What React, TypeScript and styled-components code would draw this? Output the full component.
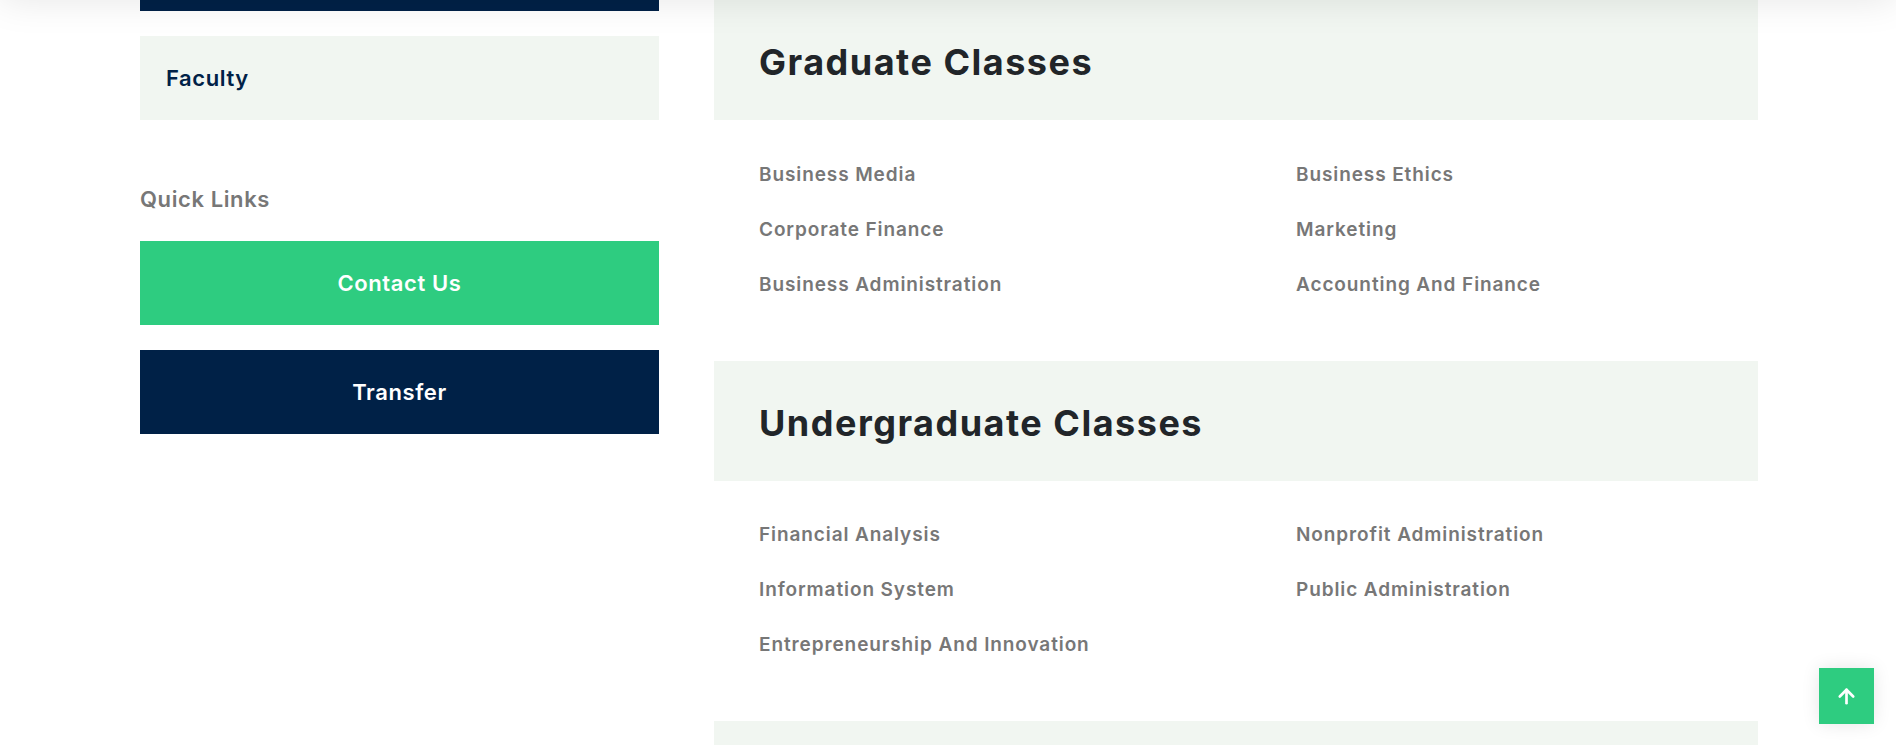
import React from 'react';
import styled, { createGlobalStyle } from 'styled-components';
import { ArrowUp } from 'lucide-react';

type Section = {
  title: string
  classes: string[]
}

const sections: Section[] = [
  {
    title: 'Graduate Classes',
    classes: ['Business Media', 'Business Ethics', 'Corporate Finance', 'Marketing', 'Business Administration', 'Accounting And Finance'],
  },
  {
    title: 'Undergraduate Classes',
    classes: ['Financial Analysis', 'Nonprofit Administration', 'Information System', 'Public Administration', 'Entrepreneurship And Innovation'],
  },
  {
    // next section, only its header background is in view
    title: '',
    classes: [],
  },
];

const GlobalStyle = createGlobalStyle`
  * { box-sizing: border-box; }
  html, body {
    margin: 0;
    padding: 0;
    background: #ffffff;
    overflow: hidden;
  }
  body {
    font-family: Inter, "Noto Sans", sans-serif;
  }
`;

const App: React.FC = () => {
  return (
    <>
      <GlobalStyle />
      <HeaderShadow />
      <Page>
        <Sidebar>
          <SideItem active />
          <SideItem>Faculty</SideItem>
          <QuickTitle>Quick Links</QuickTitle>
          <LinkButton variant="green">Contact Us</LinkButton>
          <LinkButton variant="navy">Transfer</LinkButton>
        </Sidebar>
        <Content>
          {sections.map((s, i) => (
            <ClassSection key={i}>
              <SectionHead>
                {s.title && <SectionTitle>{s.title}</SectionTitle>}
              </SectionHead>
              {s.classes.length > 0 && (
                <ClassList>
                  {s.classes.map((c) => (
                    <ClassItem key={c}>{c}</ClassItem>
                  ))}
                </ClassList>
              )}
            </ClassSection>
          ))}
        </Content>
      </Page>
      <BackToTop aria-label="Back to top">
        <ArrowUp size={23} strokeWidth={2.8} />
      </BackToTop>
    </>
  );
};

export default App;

const HeaderShadow = styled.div`
  position: fixed;
  top: -80px;
  left: 0;
  right: 0;
  height: 80px;
  background: #fff;
  box-shadow: 0 0 38px rgba(0, 0, 0, 0.1);
  z-index: 5;
`;

const Page = styled.div`
  display: flex;
  align-items: flex-start;
  gap: 55px;
  margin-top: -73px;
  padding: 0 138px 0 140px;
`;

const Sidebar = styled.aside`
  width: 519px;
  flex-shrink: 0;
  display: flex;
  flex-direction: column;
`;

const SideItem = styled.div<{ active?: boolean }>`
  height: 84px;
  display: flex;
  align-items: center;
  padding-left: 26px;
  margin-bottom: 25px;
  background: ${(p) => (p.active ? '#002147' : '#f1f6f1')};
  color: ${(p) => (p.active ? '#ffffff' : '#002147')};
  font-size: 22px;
  font-weight: 600;
  letter-spacing: 0.6px;
`;

const QuickTitle = styled.h4`
  margin: 43px 0 31px;
  font-size: 22px;
  line-height: 1;
  font-weight: 600;
  letter-spacing: 0.6px;
  color: #777777;
`;

const LinkButton = styled.a<{ variant: 'green' | 'navy' }>`
  height: 84px;
  display: flex;
  align-items: center;
  justify-content: center;
  margin-bottom: 25px;
  background: ${(p) => (p.variant === 'green' ? '#2ecc80' : '#002147')};
  color: #ffffff;
  font-size: 22px;
  font-weight: 600;
  letter-spacing: 0.6px;
  cursor: pointer;
`;

const Content = styled.main`
  flex: 1;
  padding-top: 73px;
`;

const ClassSection = styled.section`
  display: flex;
  flex-direction: column;
`;

const SectionHead = styled.div`
  height: 120px;
  display: flex;
  align-items: center;
  padding: 6px 0 0 45px;
  background: #f1f6f1;
`;

const SectionTitle = styled.h2`
  margin: 0;
  font-size: 36px;
  line-height: 1.2;
  font-weight: 700;
  letter-spacing: 1.5px;
  color: #212529;
`;

const ClassList = styled.ul`
  list-style: none;
  margin: 0;
  padding: 26.5px 0 49px 45px;
  display: grid;
  grid-template-columns: 537px 1fr;
  grid-auto-rows: 55px;
`;

const ClassItem = styled.li`
  line-height: 55px;
  font-size: 19px;
  font-weight: 600;
  letter-spacing: 0.9px;
  color: #777777;
`;

const BackToTop = styled.button`
  position: fixed;
  right: 22px;
  bottom: 21px;
  width: 55px;
  height: 56px;
  border: none;
  padding: 0;
  display: flex;
  align-items: center;
  justify-content: center;
  background: #2ecc80;
  color: #ffffff;
  box-shadow: 0 0 18px rgba(0, 0, 0, 0.1);
  cursor: pointer;
  z-index: 10;
`;
